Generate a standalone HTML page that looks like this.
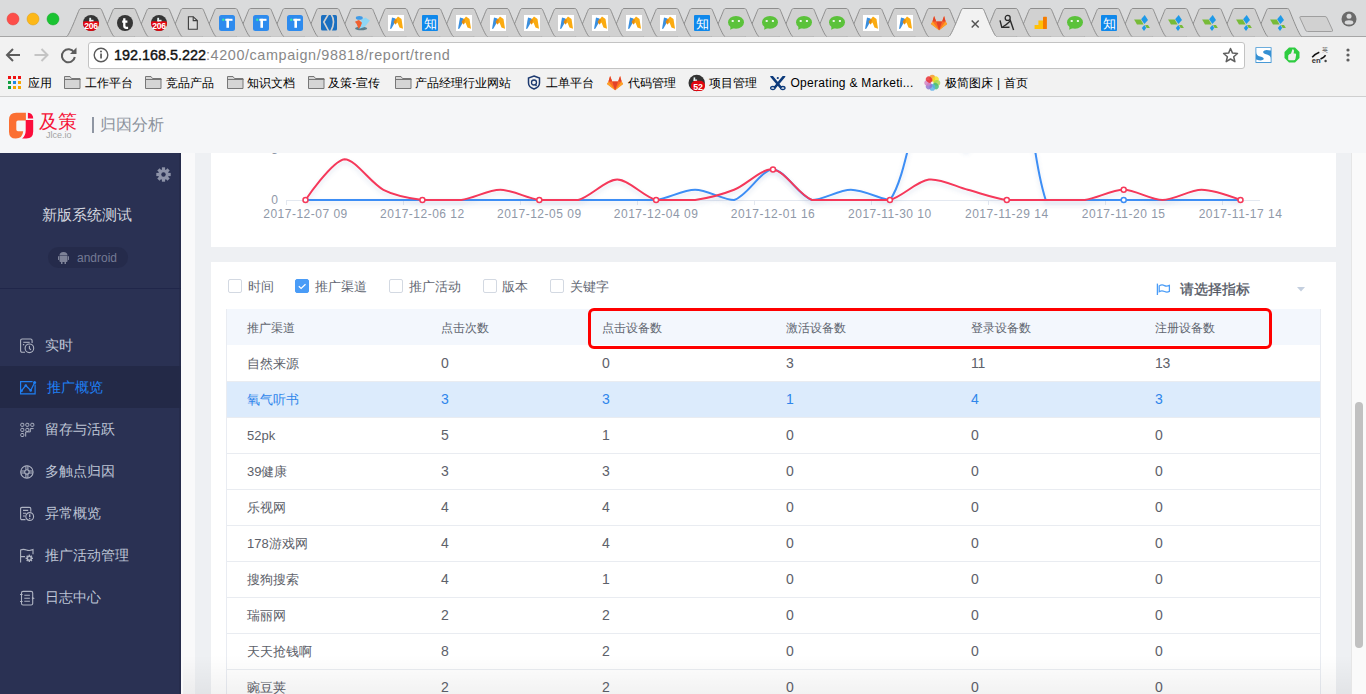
<!DOCTYPE html>
<html><head><meta charset="utf-8"><style>
*{box-sizing:border-box}
body{margin:0;width:1366px;height:694px;overflow:hidden;position:relative;background:#eef0f3;font-family:"Liberation Sans",sans-serif}
.abs{position:absolute}
.bk{position:absolute;top:74px;height:18px;line-height:18px;font-size:12px;color:#000;white-space:nowrap}
.th{position:absolute;top:318.6px;height:18px;line-height:18px;font-size:12px;color:#60656f;white-space:nowrap}
.tr{position:absolute;left:226px;width:1095px;height:36px;border-top:1px solid #e9ecf1}
.td{position:absolute;height:36px;line-height:36px;font-size:13px;color:#5d616a;white-space:nowrap}
.td.hl{color:#2f86eb}
.n{font-size:14px;letter-spacing:-0.3px;position:relative;top:-0.7px}
.cb{position:absolute;top:279px;width:14px;height:14px;border:1px solid #d3d9e2;border-radius:2px;background:#fff}
.cbt{position:absolute;top:277.6px;height:18px;line-height:18px;font-size:13px;color:#636873;white-space:nowrap}
</style></head><body>
<!-- tab strip -->
<div class="abs" style="left:0;top:0;width:1366px;height:37px;background:#dadbdc"></div>
<svg class="abs" style="left:0;top:0" width="1366" height="37">
<circle cx="13" cy="19" r="6" fill="#fd4e4a" stroke="#e23c37" stroke-width=".5"/>
<circle cx="33" cy="19" r="6" fill="#fdb818" stroke="#dc9c0f" stroke-width=".5"/>
<circle cx="53" cy="19" r="6" fill="#1ac332" stroke="#0ea824" stroke-width=".5"/>
<line x1="0" y1="36.5" x2="1366" y2="36.5" stroke="#a6a6a6" stroke-width="1"/>
<path d="M1254.0 36.5 C1256.5 36.5 1265.5 12 1267.0 9.5 Q1267.5 8.5 1268.5 8.5 L1287.3 8.5 Q1288.3 8.5 1289.0 9.5 C1290.3 12 1299.3 36.5 1301.8 36.5" fill="#d1d1d1" stroke="#8e8e8e" stroke-width="1"/><g transform="translate(1271,15)"><path d="M9.7 0.1L13 4.9L9.4 8.9L6.1 4.2Z" fill="#1f9ae8"/><path d="M-0.9 4.5H5.7L8.6 9.6H2Z" fill="#78bb38"/><path d="M10.1 10H13L14.9 12.9H11.6Z" fill="#78bb38"/><path d="M9.4 10L11.2 12.9L9 15.9L6.8 12.9Z" fill="#1f9ae8"/></g><path d="M1220.1 36.5 C1222.6 36.5 1231.6 12 1233.0 9.5 Q1233.6 8.5 1234.6 8.5 L1253.4 8.5 Q1254.4 8.5 1255.0 9.5 C1256.4 12 1265.4 36.5 1267.9 36.5" fill="#d1d1d1" stroke="#8e8e8e" stroke-width="1"/><g transform="translate(1237,15)"><path d="M9.7 0.1L13 4.9L9.4 8.9L6.1 4.2Z" fill="#1f9ae8"/><path d="M-0.9 4.5H5.7L8.6 9.6H2Z" fill="#78bb38"/><path d="M10.1 10H13L14.9 12.9H11.6Z" fill="#78bb38"/><path d="M9.4 10L11.2 12.9L9 15.9L6.8 12.9Z" fill="#1f9ae8"/></g><path d="M1186.2 36.5 C1188.7 36.5 1197.7 12 1199.1 9.5 Q1199.7 8.5 1200.7 8.5 L1219.5 8.5 Q1220.5 8.5 1221.1 9.5 C1222.5 12 1231.5 36.5 1234.0 36.5" fill="#d1d1d1" stroke="#8e8e8e" stroke-width="1"/><g transform="translate(1203,15)"><path d="M9.7 0.1L13 4.9L9.4 8.9L6.1 4.2Z" fill="#1f9ae8"/><path d="M-0.9 4.5H5.7L8.6 9.6H2Z" fill="#78bb38"/><path d="M10.1 10H13L14.9 12.9H11.6Z" fill="#78bb38"/><path d="M9.4 10L11.2 12.9L9 15.9L6.8 12.9Z" fill="#1f9ae8"/></g><path d="M1152.3 36.5 C1154.8 36.5 1163.8 12 1165.2 9.5 Q1165.8 8.5 1166.8 8.5 L1185.6 8.5 Q1186.6 8.5 1187.2 9.5 C1188.6 12 1197.6 36.5 1200.1 36.5" fill="#d1d1d1" stroke="#8e8e8e" stroke-width="1"/><g transform="translate(1169,15)"><path d="M9.7 0.1L13 4.9L9.4 8.9L6.1 4.2Z" fill="#1f9ae8"/><path d="M-0.9 4.5H5.7L8.6 9.6H2Z" fill="#78bb38"/><path d="M10.1 10H13L14.9 12.9H11.6Z" fill="#78bb38"/><path d="M9.4 10L11.2 12.9L9 15.9L6.8 12.9Z" fill="#1f9ae8"/></g><path d="M1118.3 36.5 C1120.8 36.5 1129.8 12 1131.2 9.5 Q1131.8 8.5 1132.8 8.5 L1151.6 8.5 Q1152.6 8.5 1153.2 9.5 C1154.6 12 1163.6 36.5 1166.1 36.5" fill="#d1d1d1" stroke="#8e8e8e" stroke-width="1"/><g transform="translate(1135,15)"><path d="M9.7 0.1L13 4.9L9.4 8.9L6.1 4.2Z" fill="#1f9ae8"/><path d="M-0.9 4.5H5.7L8.6 9.6H2Z" fill="#78bb38"/><path d="M10.1 10H13L14.9 12.9H11.6Z" fill="#78bb38"/><path d="M9.4 10L11.2 12.9L9 15.9L6.8 12.9Z" fill="#1f9ae8"/></g><path d="M1084.4 36.5 C1086.9 36.5 1095.9 12 1097.3 9.5 Q1097.9 8.5 1098.9 8.5 L1117.7 8.5 Q1118.7 8.5 1119.3 9.5 C1120.7 12 1129.7 36.5 1132.2 36.5" fill="#d1d1d1" stroke="#8e8e8e" stroke-width="1"/><g transform="translate(1101,15)"><rect width="16" height="16" rx="1" fill="#0f88eb"/><text x="8" y="12.8" font-size="12.5" fill="#fff" text-anchor="middle">知</text></g><path d="M1050.5 36.5 C1053.0 36.5 1062.0 12 1063.4 9.5 Q1064.0 8.5 1065.0 8.5 L1083.8 8.5 Q1084.8 8.5 1085.4 9.5 C1086.8 12 1095.8 36.5 1098.3 36.5" fill="#d1d1d1" stroke="#8e8e8e" stroke-width="1"/><g transform="translate(1067,15)"><ellipse cx="8" cy="7.3" rx="8" ry="6.4" fill="#5bc23a"/><path d="M2.5 11.5L2.2 14.8L6.5 12.8z" fill="#5bc23a"/><rect x="3.7" y="5" width="2" height="2" fill="#fff" opacity=".85"/><rect x="9.9" y="5" width="2" height="2" fill="#fff" opacity=".85"/></g><path d="M1016.5 36.5 C1019.0 36.5 1028.0 12 1029.4 9.5 Q1030.0 8.5 1031.0 8.5 L1049.8 8.5 Q1050.8 8.5 1051.4 9.5 C1052.8 12 1061.8 36.5 1064.3 36.5" fill="#d1d1d1" stroke="#8e8e8e" stroke-width="1"/><g transform="translate(1033,15)"><rect x="10" y="1.7" width="3.9" height="12.3" rx=".6" fill="#f57c00"/><path d="M1.6 14V9.9H5.4V5.5H10V14Z" fill="#ffc107"/></g><path d="M982.6 36.5 C985.1 36.5 994.1 12 995.5 9.5 Q996.1 8.5 997.1 8.5 L1015.9 8.5 Q1016.9 8.5 1017.5 9.5 C1018.9 12 1027.9 36.5 1030.4 36.5" fill="#d1d1d1" stroke="#8e8e8e" stroke-width="1"/><g transform="translate(999,15)"><circle cx="8.7" cy="2.9" r="2.5" fill="none" stroke="#2a2a2a" stroke-width="1.3"/><path d="M11 4.5L14.6 15" fill="none" stroke="#2a2a2a" stroke-width="1.4"/><path d="M1 5.3L2.8 12.4L10.5 12.2" fill="none" stroke="#2a2a2a" stroke-width="1.4"/><path d="M3.5 12Q8 9.5 11.2 6" fill="none" stroke="#2a2a2a" stroke-width="1.3"/></g><path d="M914.8 36.5 C917.2 36.5 926.2 12 927.6 9.5 Q928.2 8.5 929.2 8.5 L948.0 8.5 Q949.0 8.5 949.6 9.5 C951.0 12 960.0 36.5 962.5 36.5" fill="#d1d1d1" stroke="#8e8e8e" stroke-width="1"/><g transform="translate(931,16)"><path d="M8.1 14.3L0 8.1L1.5 5.5L3.1 0L5.2 5.4H11.1L13.1 0L14.6 5.5L16.1 8.1Z" fill="#fc6d26"/><path d="M0 8.1L1.5 5.5L8.1 14.3ZM16.1 8.1L14.6 5.5L8.1 14.3Z" fill="#fca326"/><path d="M1.5 5.5L3.1 0L5.2 5.4ZM14.6 5.5L13.1 0L11.1 5.4ZM5.2 5.4H11.1L8.1 14.3Z" fill="#e24329"/></g><path d="M880.8 36.5 C883.3 36.5 892.3 12 893.7 9.5 Q894.3 8.5 895.3 8.5 L914.1 8.5 Q915.1 8.5 915.7 9.5 C917.1 12 926.1 36.5 928.6 36.5" fill="#d1d1d1" stroke="#8e8e8e" stroke-width="1"/><g transform="translate(897,15)"><rect width="16" height="16" fill="#fff"/><path d="M5.5 7L10 1.5L13.5 4L15 13.8L11.5 12.5L9.5 7.5L7.5 9.5Z" fill="#fbab10"/><path d="M2 14L4 2.5L7.5 3.5L6 9L3.5 13.5Z" fill="#3a8fde"/><path d="M5.5 7L7.5 3.8 9 5 7.5 9.5z" fill="#e58a10"/></g><path d="M846.9 36.5 C849.4 36.5 858.4 12 859.8 9.5 Q860.4 8.5 861.4 8.5 L880.2 8.5 Q881.2 8.5 881.8 9.5 C883.2 12 892.2 36.5 894.7 36.5" fill="#d1d1d1" stroke="#8e8e8e" stroke-width="1"/><g transform="translate(863,15)"><rect width="16" height="16" fill="#fff"/><path d="M5.5 7L10 1.5L13.5 4L15 13.8L11.5 12.5L9.5 7.5L7.5 9.5Z" fill="#fbab10"/><path d="M2 14L4 2.5L7.5 3.5L6 9L3.5 13.5Z" fill="#3a8fde"/><path d="M5.5 7L7.5 3.8 9 5 7.5 9.5z" fill="#e58a10"/></g><path d="M813.0 36.5 C815.5 36.5 824.5 12 825.9 9.5 Q826.5 8.5 827.5 8.5 L846.3 8.5 Q847.3 8.5 847.9 9.5 C849.3 12 858.3 36.5 860.8 36.5" fill="#d1d1d1" stroke="#8e8e8e" stroke-width="1"/><g transform="translate(829,15)"><ellipse cx="8" cy="7.3" rx="8" ry="6.4" fill="#5bc23a"/><path d="M2.5 11.5L2.2 14.8L6.5 12.8z" fill="#5bc23a"/><rect x="3.7" y="5" width="2" height="2" fill="#fff" opacity=".85"/><rect x="9.9" y="5" width="2" height="2" fill="#fff" opacity=".85"/></g><path d="M779.0 36.5 C781.5 36.5 790.5 12 791.9 9.5 Q792.5 8.5 793.5 8.5 L812.3 8.5 Q813.3 8.5 813.9 9.5 C815.3 12 824.3 36.5 826.8 36.5" fill="#d1d1d1" stroke="#8e8e8e" stroke-width="1"/><g transform="translate(796,15)"><ellipse cx="8" cy="7.3" rx="8" ry="6.4" fill="#5bc23a"/><path d="M2.5 11.5L2.2 14.8L6.5 12.8z" fill="#5bc23a"/><rect x="3.7" y="5" width="2" height="2" fill="#fff" opacity=".85"/><rect x="9.9" y="5" width="2" height="2" fill="#fff" opacity=".85"/></g><path d="M745.1 36.5 C747.6 36.5 756.6 12 758.0 9.5 Q758.6 8.5 759.6 8.5 L778.4 8.5 Q779.4 8.5 780.0 9.5 C781.4 12 790.4 36.5 792.9 36.5" fill="#d1d1d1" stroke="#8e8e8e" stroke-width="1"/><g transform="translate(762,15)"><ellipse cx="8" cy="7.3" rx="8" ry="6.4" fill="#5bc23a"/><path d="M2.5 11.5L2.2 14.8L6.5 12.8z" fill="#5bc23a"/><rect x="3.7" y="5" width="2" height="2" fill="#fff" opacity=".85"/><rect x="9.9" y="5" width="2" height="2" fill="#fff" opacity=".85"/></g><path d="M711.2 36.5 C713.7 36.5 722.7 12 724.1 9.5 Q724.7 8.5 725.7 8.5 L744.5 8.5 Q745.5 8.5 746.1 9.5 C747.5 12 756.5 36.5 759.0 36.5" fill="#d1d1d1" stroke="#8e8e8e" stroke-width="1"/><g transform="translate(728,15)"><ellipse cx="8" cy="7.3" rx="8" ry="6.4" fill="#5bc23a"/><path d="M2.5 11.5L2.2 14.8L6.5 12.8z" fill="#5bc23a"/><rect x="3.7" y="5" width="2" height="2" fill="#fff" opacity=".85"/><rect x="9.9" y="5" width="2" height="2" fill="#fff" opacity=".85"/></g><path d="M677.2 36.5 C679.7 36.5 688.7 12 690.1 9.5 Q690.7 8.5 691.7 8.5 L710.5 8.5 Q711.5 8.5 712.1 9.5 C713.5 12 722.5 36.5 725.0 36.5" fill="#d1d1d1" stroke="#8e8e8e" stroke-width="1"/><g transform="translate(694,15)"><rect width="16" height="16" rx="1" fill="#0f88eb"/><text x="8" y="12.8" font-size="12.5" fill="#fff" text-anchor="middle">知</text></g><path d="M643.3 36.5 C645.8 36.5 654.8 12 656.2 9.5 Q656.8 8.5 657.8 8.5 L676.6 8.5 Q677.6 8.5 678.2 9.5 C679.6 12 688.6 36.5 691.1 36.5" fill="#d1d1d1" stroke="#8e8e8e" stroke-width="1"/><g transform="translate(660,15)"><rect width="16" height="16" fill="#fff"/><path d="M5.5 7L10 1.5L13.5 4L15 13.8L11.5 12.5L9.5 7.5L7.5 9.5Z" fill="#fbab10"/><path d="M2 14L4 2.5L7.5 3.5L6 9L3.5 13.5Z" fill="#3a8fde"/><path d="M5.5 7L7.5 3.8 9 5 7.5 9.5z" fill="#e58a10"/></g><path d="M609.4 36.5 C611.9 36.5 620.9 12 622.3 9.5 Q622.9 8.5 623.9 8.5 L642.7 8.5 Q643.7 8.5 644.3 9.5 C645.7 12 654.7 36.5 657.2 36.5" fill="#d1d1d1" stroke="#8e8e8e" stroke-width="1"/><g transform="translate(626,15)"><rect width="16" height="16" fill="#fff"/><path d="M5.5 7L10 1.5L13.5 4L15 13.8L11.5 12.5L9.5 7.5L7.5 9.5Z" fill="#fbab10"/><path d="M2 14L4 2.5L7.5 3.5L6 9L3.5 13.5Z" fill="#3a8fde"/><path d="M5.5 7L7.5 3.8 9 5 7.5 9.5z" fill="#e58a10"/></g><path d="M575.5 36.5 C578.0 36.5 587.0 12 588.4 9.5 Q589.0 8.5 590.0 8.5 L608.8 8.5 Q609.8 8.5 610.4 9.5 C611.8 12 620.8 36.5 623.2 36.5" fill="#d1d1d1" stroke="#8e8e8e" stroke-width="1"/><g transform="translate(592,15)"><rect width="16" height="16" fill="#fff"/><path d="M5.5 7L10 1.5L13.5 4L15 13.8L11.5 12.5L9.5 7.5L7.5 9.5Z" fill="#fbab10"/><path d="M2 14L4 2.5L7.5 3.5L6 9L3.5 13.5Z" fill="#3a8fde"/><path d="M5.5 7L7.5 3.8 9 5 7.5 9.5z" fill="#e58a10"/></g><path d="M541.5 36.5 C544.0 36.5 553.0 12 554.4 9.5 Q555.0 8.5 556.0 8.5 L574.8 8.5 Q575.8 8.5 576.4 9.5 C577.8 12 586.8 36.5 589.3 36.5" fill="#d1d1d1" stroke="#8e8e8e" stroke-width="1"/><g transform="translate(558,15)"><rect width="16" height="16" fill="#fff"/><path d="M5.5 7L10 1.5L13.5 4L15 13.8L11.5 12.5L9.5 7.5L7.5 9.5Z" fill="#fbab10"/><path d="M2 14L4 2.5L7.5 3.5L6 9L3.5 13.5Z" fill="#3a8fde"/><path d="M5.5 7L7.5 3.8 9 5 7.5 9.5z" fill="#e58a10"/></g><path d="M507.6 36.5 C510.1 36.5 519.1 12 520.5 9.5 Q521.1 8.5 522.1 8.5 L540.9 8.5 Q541.9 8.5 542.5 9.5 C543.9 12 552.9 36.5 555.4 36.5" fill="#d1d1d1" stroke="#8e8e8e" stroke-width="1"/><g transform="translate(524,15)"><rect width="16" height="16" fill="#fff"/><path d="M5.5 7L10 1.5L13.5 4L15 13.8L11.5 12.5L9.5 7.5L7.5 9.5Z" fill="#fbab10"/><path d="M2 14L4 2.5L7.5 3.5L6 9L3.5 13.5Z" fill="#3a8fde"/><path d="M5.5 7L7.5 3.8 9 5 7.5 9.5z" fill="#e58a10"/></g><path d="M473.7 36.5 C476.2 36.5 485.2 12 486.6 9.5 Q487.2 8.5 488.2 8.5 L507.0 8.5 Q508.0 8.5 508.6 9.5 C510.0 12 519.0 36.5 521.5 36.5" fill="#d1d1d1" stroke="#8e8e8e" stroke-width="1"/><g transform="translate(490,15)"><rect width="16" height="16" fill="#fff"/><path d="M5.5 7L10 1.5L13.5 4L15 13.8L11.5 12.5L9.5 7.5L7.5 9.5Z" fill="#fbab10"/><path d="M2 14L4 2.5L7.5 3.5L6 9L3.5 13.5Z" fill="#3a8fde"/><path d="M5.5 7L7.5 3.8 9 5 7.5 9.5z" fill="#e58a10"/></g><path d="M439.7 36.5 C442.2 36.5 451.2 12 452.6 9.5 Q453.2 8.5 454.2 8.5 L473.0 8.5 Q474.0 8.5 474.6 9.5 C476.0 12 485.0 36.5 487.5 36.5" fill="#d1d1d1" stroke="#8e8e8e" stroke-width="1"/><g transform="translate(456,15)"><rect width="16" height="16" fill="#fff"/><path d="M5.5 7L10 1.5L13.5 4L15 13.8L11.5 12.5L9.5 7.5L7.5 9.5Z" fill="#fbab10"/><path d="M2 14L4 2.5L7.5 3.5L6 9L3.5 13.5Z" fill="#3a8fde"/><path d="M5.5 7L7.5 3.8 9 5 7.5 9.5z" fill="#e58a10"/></g><path d="M405.8 36.5 C408.3 36.5 417.3 12 418.7 9.5 Q419.3 8.5 420.3 8.5 L439.1 8.5 Q440.1 8.5 440.7 9.5 C442.1 12 451.1 36.5 453.6 36.5" fill="#d1d1d1" stroke="#8e8e8e" stroke-width="1"/><g transform="translate(422,15)"><rect width="16" height="16" rx="1" fill="#0f88eb"/><text x="8" y="12.8" font-size="12.5" fill="#fff" text-anchor="middle">知</text></g><path d="M371.9 36.5 C374.4 36.5 383.4 12 384.8 9.5 Q385.4 8.5 386.4 8.5 L405.2 8.5 Q406.2 8.5 406.8 9.5 C408.2 12 417.2 36.5 419.7 36.5" fill="#d1d1d1" stroke="#8e8e8e" stroke-width="1"/><g transform="translate(388,15)"><rect width="16" height="16" fill="#fff"/><path d="M5.5 7L10 1.5L13.5 4L15 13.8L11.5 12.5L9.5 7.5L7.5 9.5Z" fill="#fbab10"/><path d="M2 14L4 2.5L7.5 3.5L6 9L3.5 13.5Z" fill="#3a8fde"/><path d="M5.5 7L7.5 3.8 9 5 7.5 9.5z" fill="#e58a10"/></g><path d="M337.9 36.5 C340.4 36.5 349.4 12 350.8 9.5 Q351.4 8.5 352.4 8.5 L371.2 8.5 Q372.2 8.5 372.8 9.5 C374.2 12 383.2 36.5 385.7 36.5" fill="#d1d1d1" stroke="#8e8e8e" stroke-width="1"/><g transform="translate(354,15)"><ellipse cx="7.1" cy="13.4" rx="6" ry="1.8" fill="#2a5b70" opacity=".7"/><path d="M7.5 4.2L11.5 2.4L15.9 5.5L10.6 12L5.3 13.8Z" fill="#8fd6f5"/><path d="M0.9 6.8L4.9 5L8 7.7L6.6 11.6L4.5 13.8L2.7 9Z" fill="#f0602f"/><ellipse cx="5.3" cy="2.9" rx="3.5" ry="1.8" fill="#3f9be8"/></g><path d="M304.0 36.5 C306.5 36.5 315.5 12 316.9 9.5 Q317.5 8.5 318.5 8.5 L337.3 8.5 Q338.3 8.5 338.9 9.5 C340.3 12 349.3 36.5 351.8 36.5" fill="#d1d1d1" stroke="#8e8e8e" stroke-width="1"/><g transform="translate(321,15)"><rect x="0" y="0" width="16" height="15.6" rx="1.5" fill="#1a6fc0"/><path d="M7.2 -0.5L2.8 7L7.7 16.2" fill="none" stroke="#d0d0d0" stroke-width="1.6"/><path d="M10.3 -0.5Q15 6.5 9.9 16.2" fill="none" stroke="#d0d0d0" stroke-width="1.6"/><circle cx="8.1" cy="7.7" r="2.4" fill="#1a6fc0"/></g><path d="M270.1 36.5 C272.6 36.5 281.6 12 283.0 9.5 Q283.6 8.5 284.6 8.5 L303.4 8.5 Q304.4 8.5 305.0 9.5 C306.4 12 315.4 36.5 317.9 36.5" fill="#d1d1d1" stroke="#8e8e8e" stroke-width="1"/><g transform="translate(287,15)"><rect x="0" y="0" width="16" height="16" rx="2.5" fill="#2e8bee"/><path d="M6.3 4.8H13.5" stroke="#fff" stroke-width="2"/><path d="M8.7 3.8V12.8" stroke="#fff" stroke-width="2.6"/><circle cx="4.3" cy="4.7" r="1.2" fill="#36e6a6"/></g><path d="M236.1 36.5 C238.6 36.5 247.6 12 249.0 9.5 Q249.6 8.5 250.6 8.5 L269.4 8.5 Q270.4 8.5 271.0 9.5 C272.4 12 281.4 36.5 283.9 36.5" fill="#d1d1d1" stroke="#8e8e8e" stroke-width="1"/><g transform="translate(253,15)"><rect x="0" y="0" width="16" height="16" rx="2.5" fill="#2e8bee"/><path d="M6.3 4.8H13.5" stroke="#fff" stroke-width="2"/><path d="M8.7 3.8V12.8" stroke="#fff" stroke-width="2.6"/><circle cx="4.3" cy="4.7" r="1.2" fill="#36e6a6"/></g><path d="M202.2 36.5 C204.7 36.5 213.7 12 215.1 9.5 Q215.7 8.5 216.7 8.5 L235.5 8.5 Q236.5 8.5 237.1 9.5 C238.5 12 247.5 36.5 250.0 36.5" fill="#d1d1d1" stroke="#8e8e8e" stroke-width="1"/><g transform="translate(219,15)"><rect x="0" y="0" width="16" height="16" rx="2.5" fill="#2e8bee"/><path d="M6.3 4.8H13.5" stroke="#fff" stroke-width="2"/><path d="M8.7 3.8V12.8" stroke="#fff" stroke-width="2.6"/><circle cx="4.3" cy="4.7" r="1.2" fill="#36e6a6"/></g><path d="M168.3 36.5 C170.8 36.5 179.8 12 181.2 9.5 Q181.8 8.5 182.8 8.5 L201.6 8.5 Q202.6 8.5 203.2 9.5 C204.6 12 213.6 36.5 216.1 36.5" fill="#d1d1d1" stroke="#8e8e8e" stroke-width="1"/><g transform="translate(185,15)"><path d="M3.4 1.7H8.2L12.3 5.6V14.3H3.4Z" fill="#dadada" stroke="#3c3c3c" stroke-width="1.1"/><path d="M8.2 1.7V5.6H12.3" fill="none" stroke="#3c3c3c" stroke-width="1.1"/></g><path d="M134.4 36.5 C136.9 36.5 145.9 12 147.3 9.5 Q147.9 8.5 148.9 8.5 L167.7 8.5 Q168.7 8.5 169.3 9.5 C170.7 12 179.7 36.5 182.2 36.5" fill="#d1d1d1" stroke="#8e8e8e" stroke-width="1"/><g transform="translate(151,15)"><clipPath id="cp159"><circle cx="8" cy="8" r="8"/></clipPath><g clip-path="url(#cp159)"><rect width="16" height="16" fill="#353535"/><rect x="-1" y="6.2" width="18" height="10" rx="3" fill="#e3060f"/><rect x="6.3" y="2.8" width="1.8" height="3.6" fill="#e8f4f4"/><rect x="6.3" y="4.8" width="4.2" height="1.6" fill="#e8f4f4"/></g><text x="8" y="14.3" font-size="8.6" font-weight="bold" fill="#fff" text-anchor="middle" letter-spacing="-0.3" font-family="Liberation Sans">206</text></g><path d="M100.4 36.5 C102.9 36.5 111.9 12 113.3 9.5 Q113.9 8.5 114.9 8.5 L133.7 8.5 Q134.7 8.5 135.3 9.5 C136.7 12 145.7 36.5 148.2 36.5" fill="#d1d1d1" stroke="#8e8e8e" stroke-width="1"/><g transform="translate(117,15)"><circle cx="8" cy="8" r="8" fill="#353535"/><path d="M7.3 3.2v7.6q0 2 2 2h1.8M5.2 6.6h5.2" stroke="#fff" stroke-width="2.3" fill="none"/></g><path d="M66.5 36.5 C69.0 36.5 78.0 12 79.4 9.5 Q80.0 8.5 81.0 8.5 L99.8 8.5 Q100.8 8.5 101.4 9.5 C102.8 12 111.8 36.5 114.3 36.5" fill="#d1d1d1" stroke="#8e8e8e" stroke-width="1"/><g transform="translate(83,15)"><clipPath id="cp91"><circle cx="8" cy="8" r="8"/></clipPath><g clip-path="url(#cp91)"><rect width="16" height="16" fill="#353535"/><rect x="-1" y="6.2" width="18" height="10" rx="3" fill="#e3060f"/><rect x="6.3" y="2.8" width="1.8" height="3.6" fill="#e8f4f4"/><rect x="6.3" y="4.8" width="4.2" height="1.6" fill="#e8f4f4"/></g><text x="8" y="14.3" font-size="8.6" font-weight="bold" fill="#fff" text-anchor="middle" letter-spacing="-0.3" font-family="Liberation Sans">206</text></g><path d="M948.7 36.5 C951.2 36.5 960.2 12 961.6 9.5 Q962.2 8.5 963.2 8.5 L982.0 8.5 Q983.0 8.5 983.6 9.5 C985.0 12 994.0 36.5 996.5 36.5" fill="#f2f2f2" stroke="#8e8e8e" stroke-width="1"/><rect x="949.2" y="36" width="47" height="1" fill="#f2f2f2"/><path d="M971.7 20.5l7 7m0-7l-7 7" stroke="#555" stroke-width="1.5"/>
<path d="M1300.5 16.5h24.5q1.5 0 2 1.5l5.5 12q.5 1.5-1 1.5h-24q-1.5 0-2-1.5l-5.5-12q-.5-1.5.5-1.5z" fill="#d1d1d1" stroke="#9f9f9f"/>
<circle cx="1349" cy="19" r="7.5" fill="#6b6b6b"/><circle cx="1349" cy="16.3" r="2.5" fill="#dadbdc"/><ellipse cx="1349" cy="22.4" rx="4.3" ry="2.1" fill="#dadbdc"/>
</svg>
<!-- toolbar -->
<div class="abs" style="left:0;top:37px;width:1366px;height:59px;background:#f2f2f2"></div>
<svg class="abs" style="left:0;top:37px" width="90" height="34">
<path d="M20 18H7.5M13 12l-6 6 6 6" fill="none" stroke="#5d5d5d" stroke-width="2"/>
<path d="M34.5 18H47M41.5 12l6 6-6 6" fill="none" stroke="#c4c4c4" stroke-width="2"/>
<path d="M74 15.5A6.5 6.5 0 1 0 74.8 20" fill="none" stroke="#5d5d5d" stroke-width="2"/><path d="M76.5 10.5v6.5h-6.5z" fill="#5d5d5d"/>
</svg>
<div class="abs" style="left:87.5px;top:41.5px;width:1157.5px;height:27px;background:#fff;border:1px solid #c3c3c3;border-radius:3px"></div>
<svg class="abs" style="left:92px;top:46px" width="18" height="18"><circle cx="9" cy="9" r="6.8" fill="none" stroke="#5a5a5a" stroke-width="1.4"/><rect x="8.2" y="7.5" width="1.7" height="5" fill="#5a5a5a"/><circle cx="9" cy="5.4" r="1" fill="#5a5a5a"/></svg>
<div class="abs" style="left:114px;top:46px;height:18px;line-height:18px;font-size:14.4px;letter-spacing:0.42px;color:#111;white-space:nowrap"><span style="-webkit-text-stroke:0.4px #111;color:#111;letter-spacing:0">192.168.5.222</span><span style="color:#888;letter-spacing:0.59px">:4200/campaign/98818/report/trend</span></div>
<svg class="abs" style="left:1220px;top:45px" width="20" height="20"><path d="M10.5 3.5l2 4.6 5 .4-3.8 3.3 1.2 4.9-4.4-2.7-4.3 2.7 1.2-4.9-3.8-3.3 5-.4z" fill="none" stroke="#5f5f5f" stroke-width="1.5" stroke-linejoin="round"/></svg>
<svg class="abs" style="left:1255px;top:47px" width="17" height="16"><rect x="0.5" y="0.3" width="16" height="15.6" fill="#3590d3"/><path d="M1.3 1.1H15.7V3.6Q9.5 1.9 8.2 4.6Q7.6 6.6 12 7.6Q15.8 8.6 15.7 12V15.1H1.3V12.4Q6.7 14.4 8.7 12.3Q9.3 10.6 5.2 9.6Q1.3 8.6 1.3 5Z" fill="#fff"/></svg>
<svg class="abs" style="left:1284px;top:47px" width="16" height="16"><path d="M5 .5h6l4.5 4.5v6L11 15.5H5L.5 11V5z" fill="#2ecc40"/><path d="M4.2 8.5Q5 7 7 6.5L8.5 2.3Q10 2 10 4L9.6 6.6H11.3Q12.3 6.8 12.1 8L11.4 12Q11 13.2 9.8 13.2H5.5Q4.2 13.2 4.2 12Z" fill="#eeeeee"/></svg>
<svg class="abs" style="left:1311px;top:46px" width="18" height="18"><path d="M1.2 11.3Q4 8 8.3 6.3M9.5 13Q13 11.5 14.6 9.2" fill="none" stroke="#111" stroke-width="1.5"/><text x="0.8" y="16.6" font-size="7.6" font-weight="bold" fill="#333" font-family="Liberation Sans">en</text><text x="11" y="6" font-size="5.5" fill="#444">英</text><circle cx="14.6" cy="15" r="1.2" fill="#444"/></svg>
<svg class="abs" style="left:1344px;top:47px" width="8" height="16"><circle cx="4" cy="3" r="1.6" fill="#5f5f5f"/><circle cx="4" cy="8" r="1.6" fill="#5f5f5f"/><circle cx="4" cy="13" r="1.6" fill="#5f5f5f"/></svg>
<!-- bookmarks -->
<svg style="position:absolute;left:8px;top:76px" width="13" height="13"><rect x="0" y="0" width="3" height="3" fill="#ee1111"/><rect x="5" y="0" width="3" height="3" fill="#ee1111"/><rect x="10" y="0" width="3" height="3" fill="#ee1111"/><rect x="0" y="5" width="3" height="3" fill="#12a041"/><rect x="5" y="5" width="3" height="3" fill="#1e88e5"/><rect x="10" y="5" width="3" height="3" fill="#f7a600"/><rect x="0" y="10" width="3" height="3" fill="#12a041"/><rect x="5" y="10" width="3" height="3" fill="#f7a600"/><rect x="10" y="10" width="3" height="3" fill="#f7a600"/></svg><div class="bk" style="left:27.5px">应用</div><svg style="position:absolute;left:64px;top:76px" width="17" height="13"><path d="M0.5 12.5V0.5h5.5l1.5 2h8.5v10z" fill="#d5d5d5" stroke="#777" stroke-width="1"/><path d="M0.5 3.5h16" stroke="#777"/></svg><div class="bk" style="left:85px">工作平台</div><svg style="position:absolute;left:145px;top:76px" width="17" height="13"><path d="M0.5 12.5V0.5h5.5l1.5 2h8.5v10z" fill="#d5d5d5" stroke="#777" stroke-width="1"/><path d="M0.5 3.5h16" stroke="#777"/></svg><div class="bk" style="left:166px">竞品产品</div><svg style="position:absolute;left:227px;top:76px" width="17" height="13"><path d="M0.5 12.5V0.5h5.5l1.5 2h8.5v10z" fill="#d5d5d5" stroke="#777" stroke-width="1"/><path d="M0.5 3.5h16" stroke="#777"/></svg><div class="bk" style="left:247px">知识文档</div><svg style="position:absolute;left:308px;top:76px" width="17" height="13"><path d="M0.5 12.5V0.5h5.5l1.5 2h8.5v10z" fill="#d5d5d5" stroke="#777" stroke-width="1"/><path d="M0.5 3.5h16" stroke="#777"/></svg><div class="bk" style="left:328px">及策-宣传</div><svg style="position:absolute;left:395px;top:76px" width="17" height="13"><path d="M0.5 12.5V0.5h5.5l1.5 2h8.5v10z" fill="#d5d5d5" stroke="#777" stroke-width="1"/><path d="M0.5 3.5h16" stroke="#777"/></svg><div class="bk" style="left:415px">产品经理行业网站</div><svg style="position:absolute;left:527px;top:75px" width="14" height="15"><path d="M7 1l5.5 2v5c0 3-2.5 5-5.5 6-3-1-5.5-3-5.5-6V3z" fill="none" stroke="#1d3a70" stroke-width="1.5"/><circle cx="7" cy="7.5" r="2.5" fill="none" stroke="#1d3a70" stroke-width="1.3"/><path d="M8 9l1.5 2" stroke="#1d3a70" stroke-width="1.3"/></svg><div class="bk" style="left:546px">工单平台</div><svg style="position:absolute;left:607px;top:75.7px" width="17" height="15"><path d="M8.1 14.3L0 8.1L1.5 5.5L3.1 0L5.2 5.4H11.1L13.1 0L14.6 5.5L16.1 8.1Z" fill="#fc6d26"/><path d="M0 8.1L1.5 5.5L8.1 14.3ZM16.1 8.1L14.6 5.5L8.1 14.3Z" fill="#fca326"/><path d="M1.5 5.5L3.1 0L5.2 5.4ZM14.6 5.5L13.1 0L11.1 5.4ZM5.2 5.4H11.1L8.1 14.3Z" fill="#e24329"/></svg><div class="bk" style="left:627.5px">代码管理</div><svg style="position:absolute;left:688px;top:74px" width="18" height="18"><circle cx="8.7" cy="9" r="8.2" fill="#333"/><rect x="5.6" y="3.4" width="1.6" height="3.6" fill="#e8f4f4"/><rect x="5.6" y="5.5" width="3.5" height="1.5" fill="#e8f4f4"/><path d="M2.9 12A5 5 0 0 1 7.9 6.7H12A5 5 0 0 1 17 11.7V12A5 5 0 0 1 12 17.1H7.9A5 5 0 0 1 2.9 12Z" fill="#e0060f"/><text x="10" y="15.5" font-size="8.8" font-weight="bold" fill="#fff" text-anchor="middle" letter-spacing="-0.2" font-family="Liberation Sans">52</text></svg><div class="bk" style="left:709px">项目管理</div><svg style="position:absolute;left:770px;top:75.7px" width="17" height="15"><path d="M1.6 0.4L10.4 11M14 0.4L5.2 11" stroke="#0c3a7b" stroke-width="2.6" stroke-linecap="round"/><ellipse cx="2.8" cy="12" rx="2.2" ry="1.5" fill="none" stroke="#0c3a7b" stroke-width="1.3"/><ellipse cx="12.8" cy="12" rx="2.2" ry="1.5" fill="none" stroke="#0c3a7b" stroke-width="1.3"/><circle cx="7.8" cy="2" r="1.1" fill="#0c3a7b"/></svg><div class="bk" style="left:790.5px;letter-spacing:0.29px">Operating &amp; Marketi...</div><svg style="position:absolute;left:924px;top:74px" width="17" height="17"><ellipse cx="8.3" cy="4.2" rx="2.9" ry="3.4" fill="#f7941d" transform="rotate(0 8.3 8.8)" opacity=".8"/><ellipse cx="8.3" cy="4.2" rx="2.9" ry="3.4" fill="#f2e01b" transform="rotate(45 8.3 8.8)" opacity=".8"/><ellipse cx="8.3" cy="4.2" rx="2.9" ry="3.4" fill="#a5d44a" transform="rotate(90 8.3 8.8)" opacity=".8"/><ellipse cx="8.3" cy="4.2" rx="2.9" ry="3.4" fill="#3dbb76" transform="rotate(135 8.3 8.8)" opacity=".8"/><ellipse cx="8.3" cy="4.2" rx="2.9" ry="3.4" fill="#5aaee8" transform="rotate(180 8.3 8.8)" opacity=".8"/><ellipse cx="8.3" cy="4.2" rx="2.9" ry="3.4" fill="#8e6fd0" transform="rotate(225 8.3 8.8)" opacity=".8"/><ellipse cx="8.3" cy="4.2" rx="2.9" ry="3.4" fill="#d47fc0" transform="rotate(270 8.3 8.8)" opacity=".8"/><ellipse cx="8.3" cy="4.2" rx="2.9" ry="3.4" fill="#e8262b" transform="rotate(315 8.3 8.8)" opacity=".8"/></svg><div class="bk" style="left:944.5px;letter-spacing:0.25px">极简图床 | 首页</div>
<div class="abs" style="left:0;top:96px;width:1366px;height:1px;background:#cfcfcf"></div>
<!-- main bg -->
<div class="abs" style="left:181px;top:153px;width:14px;height:541px;background:#f9f9fa"></div>
<!-- chart card -->
<div class="abs" style="left:211px;top:140px;width:1125px;height:107px;background:#fff"></div>
<svg class="abs" style="left:0;top:153px" width="1366" height="107" viewBox="0 153 1366 107"><defs><filter id="sh" x="-5%" y="-30%" width="110%" height="160%"><feGaussianBlur in="SourceAlpha" stdDeviation="2.2"/><feOffset dy="3" result="b"/><feFlood flood-color="#5a78b4" flood-opacity="0.2"/><feComposite in2="b" operator="in"/><feMerge><feMergeNode/><feMergeNode in="SourceGraphic"/></feMerge></filter></defs><line x1="286" y1="200.5" x2="1260" y2="200.5" stroke="#e3e8f0" stroke-width="1"/><line x1="286.5" y1="200" x2="286.5" y2="205" stroke="#e3e8f0" stroke-width="1"/><line x1="403.5" y1="200" x2="403.5" y2="205" stroke="#e3e8f0" stroke-width="1"/><line x1="520.5" y1="200" x2="520.5" y2="205" stroke="#e3e8f0" stroke-width="1"/><line x1="637.5" y1="200" x2="637.5" y2="205" stroke="#e3e8f0" stroke-width="1"/><line x1="754.5" y1="200" x2="754.5" y2="205" stroke="#e3e8f0" stroke-width="1"/><line x1="871.5" y1="200" x2="871.5" y2="205" stroke="#e3e8f0" stroke-width="1"/><line x1="988.5" y1="200" x2="988.5" y2="205" stroke="#e3e8f0" stroke-width="1"/><line x1="1105.5" y1="200" x2="1105.5" y2="205" stroke="#e3e8f0" stroke-width="1"/><line x1="1222.5" y1="200" x2="1222.5" y2="205" stroke="#e3e8f0" stroke-width="1"/><path d="M305.5 200.0 C305.5 200.0 332.8 200.0 344.5 200.0 C356.1 200.0 371.7 200.0 383.4 200.0 C395.1 200.0 410.7 200.0 422.4 200.0 C434.1 200.0 449.7 200.0 461.3 200.0 C473.0 200.0 488.6 200.0 500.3 200.0 C512.0 200.0 527.6 200.0 539.3 200.0 C550.9 200.0 566.5 200.0 578.2 200.0 C589.9 200.0 605.5 200.0 617.2 200.0 C628.9 200.0 644.6 200.0 656.1 200.0 C668.0 198.4 683.4 189.8 695.1 189.8 C706.8 189.8 723.6 200.0 734.1 200.0 C747.0 196.6 761.3 169.4 773.0 169.4 C784.7 169.4 799.1 196.6 812.0 200.0 C822.5 200.0 839.3 189.8 850.9 189.8 C862.6 189.8 884.0 200.0 889.9 200.0 C907.4 177.1 914.3 97.3 928.9 87.8 C937.7 82.0 961.5 159.7 967.8 149.0 C984.9 119.9 996.4 -44.8 1006.8 -44.8 C1019.8 -36.3 1025.5 136.5 1045.7 200.0 C1048.9 200.0 1073.0 200.0 1084.7 200.0 C1096.4 200.0 1112.0 200.0 1123.7 200.0 C1135.3 200.0 1150.9 200.0 1162.6 200.0 C1174.3 200.0 1189.9 200.0 1201.6 200.0 C1213.3 200.0 1240.5 200.0 1240.5 200.0" fill="none" stroke="#3d8ef5" stroke-width="2" filter="url(#sh)"/><path d="M305.5 200.0 C305.5 200.0 332.0 160.8 344.5 159.2 C355.4 159.2 370.5 183.0 383.4 189.8 C393.9 195.3 410.5 198.4 422.4 200.0 C433.9 200.0 449.8 200.0 461.3 200.0 C473.2 198.4 488.6 189.8 500.3 189.8 C512.0 189.8 527.4 198.4 539.3 200.0 C550.8 200.0 567.2 200.0 578.2 200.0 C590.6 196.8 605.5 179.6 617.2 179.6 C628.9 179.6 643.7 196.8 656.1 200.0 C667.1 200.0 683.6 200.0 695.1 200.0 C707.0 198.4 722.9 194.2 734.1 189.8 C746.3 185.0 762.0 168.0 773.0 169.4 C785.4 171.0 798.9 194.9 812.0 200.0 C822.3 200.0 839.3 200.0 850.9 200.0 C862.6 200.0 878.9 200.0 889.9 200.0 C902.3 196.8 916.7 181.2 928.9 179.6 C940.0 178.1 956.1 186.7 967.8 189.8 C979.5 192.9 994.9 198.4 1006.8 200.0 C1018.3 200.0 1034.1 200.0 1045.7 200.0 C1057.4 200.0 1073.2 200.0 1084.7 200.0 C1096.6 198.4 1112.0 189.8 1123.7 189.8 C1135.3 189.8 1150.9 200.0 1162.6 200.0 C1174.3 200.0 1189.9 189.8 1201.6 189.8 C1213.3 189.8 1240.5 200.0 1240.5 200.0" fill="none" stroke="#f5395a" stroke-width="2" filter="url(#sh)"/><circle cx="305.5" cy="200.0" r="2.5" fill="#fff" stroke="#f5395a" stroke-width="1.5"/><circle cx="422.4" cy="200.0" r="2.5" fill="#fff" stroke="#f5395a" stroke-width="1.5"/><circle cx="539.3" cy="200.0" r="2.5" fill="#fff" stroke="#f5395a" stroke-width="1.5"/><circle cx="656.1" cy="200.0" r="2.5" fill="#fff" stroke="#f5395a" stroke-width="1.5"/><circle cx="773.0" cy="169.4" r="2.5" fill="#fff" stroke="#f5395a" stroke-width="1.5"/><circle cx="889.9" cy="200.0" r="2.5" fill="#fff" stroke="#f5395a" stroke-width="1.5"/><circle cx="1006.8" cy="200.0" r="2.5" fill="#fff" stroke="#f5395a" stroke-width="1.5"/><circle cx="1123.7" cy="200" r="2.5" fill="#fff" stroke="#3d8ef5" stroke-width="1.5"/><circle cx="1123.7" cy="189.8" r="2.5" fill="#fff" stroke="#f5395a" stroke-width="1.5"/><circle cx="1240.5" cy="200.0" r="2.5" fill="#fff" stroke="#f5395a" stroke-width="1.5"/><text x="305.5" y="218" text-anchor="middle" font-size="12" letter-spacing="0.5" fill="#8f98a8">2017-12-07 09</text><text x="422.4" y="218" text-anchor="middle" font-size="12" letter-spacing="0.5" fill="#8f98a8">2017-12-06 12</text><text x="539.3" y="218" text-anchor="middle" font-size="12" letter-spacing="0.5" fill="#8f98a8">2017-12-05 09</text><text x="656.1" y="218" text-anchor="middle" font-size="12" letter-spacing="0.5" fill="#8f98a8">2017-12-04 09</text><text x="773.0" y="218" text-anchor="middle" font-size="12" letter-spacing="0.5" fill="#8f98a8">2017-12-01 16</text><text x="889.9" y="218" text-anchor="middle" font-size="12" letter-spacing="0.5" fill="#8f98a8">2017-11-30 10</text><text x="1006.8" y="218" text-anchor="middle" font-size="12" letter-spacing="0.5" fill="#8f98a8">2017-11-29 14</text><text x="1123.7" y="218" text-anchor="middle" font-size="12" letter-spacing="0.5" fill="#8f98a8">2017-11-20 15</text><text x="1240.5" y="218" text-anchor="middle" font-size="12" letter-spacing="0.5" fill="#8f98a8">2017-11-17 14</text><text x="278" y="204" text-anchor="end" font-size="12" fill="#8f98a8">0</text><text x="278" y="154" text-anchor="end" font-size="12" fill="#8f98a8">5</text></svg>
<!-- table card -->
<div class="abs" style="left:211px;top:262px;width:1125px;height:440px;background:#fff"></div>
<div class="cb" style="left:228px"></div><div class="cbt" style="left:247.5px">时间</div>
<div class="cb" style="left:295px;background:#4a9cf7;border-color:#4a9cf7"><svg width="12" height="12" style="position:absolute;left:0;top:0"><path d="M2.8 6.3l2.3 2.2 4.4-4.2" fill="none" stroke="#fff" stroke-width="1.2"/></svg></div><div class="cbt" style="left:315px">推广渠道</div>
<div class="cb" style="left:389px"></div><div class="cbt" style="left:408.5px">推广活动</div>
<div class="cb" style="left:483px"></div><div class="cbt" style="left:502px">版本</div>
<div class="cb" style="left:550px"></div><div class="cbt" style="left:570px">关键字</div>
<svg class="abs" style="left:1155px;top:282.7px" width="16" height="14"><path d="M2.4 0.6V12" stroke="#4a9cf7" stroke-width="1.3"/><path d="M4.2 2.9C6.5 1.4 8.3 2 9.5 2.6S12.5 3.3 14.4 2.4V8.4C12.5 9.4 10.7 9 9.5 8.5S6.5 7.4 4.2 8.7Z" fill="none" stroke="#4a9cf7" stroke-width="1.25"/></svg>
<div class="abs" style="left:1179.5px;top:279px;height:20px;line-height:20px;font-size:14px;-webkit-text-stroke:0.28px #50555f;color:#50555f;white-space:nowrap">请选择指标</div>
<svg class="abs" style="left:1297px;top:286.8px" width="8" height="5"><path d="M0 0h8L4 4.6z" fill="#c4cfdf"/></svg>
<div style="position:absolute;left:226px;top:309px;width:1095px;height:36px;background:#f3f7fd"></div><div class="th" style="left:247px">推广渠道</div><div class="th" style="left:441px">点击次数</div><div class="th" style="left:602px">点击设备数</div><div class="th" style="left:786px">激活设备数</div><div class="th" style="left:971px">登录设备数</div><div class="th" style="left:1155px">注册设备数</div><div class="tr" style="top:345px;background:#fff;border-top:none;"></div><div class="td" style="left:247px;top:345.6px">自然来源</div><div class="td" style="left:441px;top:345.6px"><span class="n">0</span></div><div class="td" style="left:602px;top:345.6px"><span class="n">0</span></div><div class="td" style="left:786px;top:345.6px"><span class="n">3</span></div><div class="td" style="left:971px;top:345.6px"><span class="n">11</span></div><div class="td" style="left:1155px;top:345.6px"><span class="n">13</span></div><div class="tr" style="top:381px;background:#dcebfc;"></div><div class="td hl" style="left:247px;top:381.6px">氧气听书</div><div class="td hl" style="left:441px;top:381.6px"><span class="n">3</span></div><div class="td hl" style="left:602px;top:381.6px"><span class="n">3</span></div><div class="td hl" style="left:786px;top:381.6px"><span class="n">1</span></div><div class="td hl" style="left:971px;top:381.6px"><span class="n">4</span></div><div class="td hl" style="left:1155px;top:381.6px"><span class="n">3</span></div><div class="tr" style="top:417px;background:#fff;"></div><div class="td" style="left:247px;top:417.6px">52pk</div><div class="td" style="left:441px;top:417.6px"><span class="n">5</span></div><div class="td" style="left:602px;top:417.6px"><span class="n">1</span></div><div class="td" style="left:786px;top:417.6px"><span class="n">0</span></div><div class="td" style="left:971px;top:417.6px"><span class="n">0</span></div><div class="td" style="left:1155px;top:417.6px"><span class="n">0</span></div><div class="tr" style="top:453px;background:#fff;"></div><div class="td" style="left:247px;top:453.6px">39健康</div><div class="td" style="left:441px;top:453.6px"><span class="n">3</span></div><div class="td" style="left:602px;top:453.6px"><span class="n">3</span></div><div class="td" style="left:786px;top:453.6px"><span class="n">0</span></div><div class="td" style="left:971px;top:453.6px"><span class="n">0</span></div><div class="td" style="left:1155px;top:453.6px"><span class="n">0</span></div><div class="tr" style="top:489px;background:#fff;"></div><div class="td" style="left:247px;top:489.6px">乐视网</div><div class="td" style="left:441px;top:489.6px"><span class="n">4</span></div><div class="td" style="left:602px;top:489.6px"><span class="n">4</span></div><div class="td" style="left:786px;top:489.6px"><span class="n">0</span></div><div class="td" style="left:971px;top:489.6px"><span class="n">0</span></div><div class="td" style="left:1155px;top:489.6px"><span class="n">0</span></div><div class="tr" style="top:525px;background:#fff;"></div><div class="td" style="left:247px;top:525.6px">178游戏网</div><div class="td" style="left:441px;top:525.6px"><span class="n">4</span></div><div class="td" style="left:602px;top:525.6px"><span class="n">4</span></div><div class="td" style="left:786px;top:525.6px"><span class="n">0</span></div><div class="td" style="left:971px;top:525.6px"><span class="n">0</span></div><div class="td" style="left:1155px;top:525.6px"><span class="n">0</span></div><div class="tr" style="top:561px;background:#fff;"></div><div class="td" style="left:247px;top:561.6px">搜狗搜索</div><div class="td" style="left:441px;top:561.6px"><span class="n">4</span></div><div class="td" style="left:602px;top:561.6px"><span class="n">1</span></div><div class="td" style="left:786px;top:561.6px"><span class="n">0</span></div><div class="td" style="left:971px;top:561.6px"><span class="n">0</span></div><div class="td" style="left:1155px;top:561.6px"><span class="n">0</span></div><div class="tr" style="top:597px;background:#fff;"></div><div class="td" style="left:247px;top:597.6px">瑞丽网</div><div class="td" style="left:441px;top:597.6px"><span class="n">2</span></div><div class="td" style="left:602px;top:597.6px"><span class="n">2</span></div><div class="td" style="left:786px;top:597.6px"><span class="n">0</span></div><div class="td" style="left:971px;top:597.6px"><span class="n">0</span></div><div class="td" style="left:1155px;top:597.6px"><span class="n">0</span></div><div class="tr" style="top:633px;background:#fff;"></div><div class="td" style="left:247px;top:633.6px">天天抢钱啊</div><div class="td" style="left:441px;top:633.6px"><span class="n">8</span></div><div class="td" style="left:602px;top:633.6px"><span class="n">2</span></div><div class="td" style="left:786px;top:633.6px"><span class="n">0</span></div><div class="td" style="left:971px;top:633.6px"><span class="n">0</span></div><div class="td" style="left:1155px;top:633.6px"><span class="n">0</span></div><div class="tr" style="top:669px;background:#fff;"></div><div class="td" style="left:247px;top:669.6px">豌豆荚</div><div class="td" style="left:441px;top:669.6px"><span class="n">2</span></div><div class="td" style="left:602px;top:669.6px"><span class="n">2</span></div><div class="td" style="left:786px;top:669.6px"><span class="n">0</span></div><div class="td" style="left:971px;top:669.6px"><span class="n">0</span></div><div class="td" style="left:1155px;top:669.6px"><span class="n">0</span></div>
<div class="abs" style="left:226px;top:309px;width:1px;height:400px;background:#e9ecf2"></div><div class="abs" style="left:1320px;top:309px;width:1px;height:400px;background:#e9ecf2"></div>
<!-- red annotation -->
<div class="abs" style="left:588px;top:308px;width:684px;height:41px;border:3px solid #ff0000;border-radius:6px"></div>
<!-- scrollbar -->
<div class="abs" style="left:1351px;top:153px;width:15px;height:541px;background:#fafafa;border-left:1px solid #e6e6e6"></div>
<div class="abs" style="left:1355px;top:402px;width:8px;height:246px;background:#c1c1c1;border-radius:4px"></div>
<!-- header -->
<div class="abs" style="left:0;top:97px;width:1366px;height:56px;background:#f5f6f8"></div>
<svg class="abs" style="left:5px;top:108px" width="35" height="35"><path d="M4 12Q4 4.8 11.2 4.8H20.9V12.4H13Q11.3 12.4 11.3 14.2V21.4Q11.3 23.2 13 23.2H18.2Q17.6 30.5 10.8 30.5Q4 30.5 4 23.7Z" fill="#fb6f33"/><path d="M20.7 12.1H28.2V23.5Q28.2 30.5 21.2 30.5H17.1Q20.7 27.5 20.7 22.5Z" fill="#fc0d3c"/><path d="M22.9 4.8Q28.2 5.2 28.2 10.6H22.9Z" fill="#fc0d3c"/></svg>
<div class="abs" style="left:39px;top:110.5px;height:22px;line-height:22px;font-size:19px;color:#f5153a;white-space:nowrap">及策</div>
<div class="abs" style="left:46px;top:130px;height:11px;line-height:11px;font-size:9px;color:#a2a2a2;white-space:nowrap">Jlce.io</div>
<div class="abs" style="left:92px;top:117px;width:1.5px;height:16px;background:#8f96a3"></div>
<div class="abs" style="left:99.5px;top:114px;height:22px;line-height:22px;font-size:16px;color:#8c929c;white-space:nowrap">归因分析</div>
<!-- sidebar -->
<div class="abs" style="left:0;top:153px;width:181px;height:541px;background:#2a3153;border-right:2px solid #262c4c"></div>
<svg class="abs" style="left:156px;top:167px" width="15" height="15"><g transform="translate(7.5 7.5)" fill="#8d93a8"><circle r="5.2"/><rect x="-1.6" y="-7.2" width="3.2" height="3" transform="rotate(0)"/><rect x="-1.6" y="-7.2" width="3.2" height="3" transform="rotate(45)"/><rect x="-1.6" y="-7.2" width="3.2" height="3" transform="rotate(90)"/><rect x="-1.6" y="-7.2" width="3.2" height="3" transform="rotate(135)"/><rect x="-1.6" y="-7.2" width="3.2" height="3" transform="rotate(180)"/><rect x="-1.6" y="-7.2" width="3.2" height="3" transform="rotate(225)"/><rect x="-1.6" y="-7.2" width="3.2" height="3" transform="rotate(270)"/><rect x="-1.6" y="-7.2" width="3.2" height="3" transform="rotate(315)"/></g><circle cx="7.5" cy="7.5" r="2.2" fill="#2a3153"/></svg>
<div class="abs" style="left:42px;top:205px;height:20px;line-height:20px;font-size:15px;color:#d3d6df;white-space:nowrap">新版系统测试</div>
<div class="abs" style="left:48px;top:247px;width:80px;height:21px;border-radius:11px;background:#252b4b"></div>
<svg class="abs" style="left:58px;top:251px" width="11" height="13"><path d="M1.5 5h8v5q0 1-1 1h-6q-1 0-1-1z" fill="#7e8398"/><path d="M1.5 4.5q0-3.5 4-3.5t4 3.5z" fill="#7e8398"/><rect x="0" y="5" width="1" height="4" rx=".5" fill="#7e8398"/><rect x="10" y="5" width="1" height="4" rx=".5" fill="#7e8398"/><rect x="3" y="10" width="1.5" height="3" fill="#7e8398"/><rect x="6.5" y="10" width="1.5" height="3" fill="#7e8398"/></svg>
<div class="abs" style="left:77px;top:249.5px;height:17px;line-height:17px;font-size:12px;color:#747a94;letter-spacing:0px;white-space:nowrap">android</div>
<div class="abs" style="left:0;top:288px;width:181px;height:1px;background:#20264a"></div>
<svg style="position:absolute;left:20px;top:338px;color:#aeb3c2" width="17" height="17"><g fill="none" stroke="currentColor" stroke-width="1.1"><path d="M5 14.3H2.1Q0.6 14.3 0.6 12.8V2.5Q0.6 1 2.1 1H10.6Q12.1 1 12.1 2.5V5"/><path d="M3.3 4.3H9.7"/><circle cx="9.4" cy="10.3" r="4.3"/><path d="M9.4 7.8V10.4L11 11.8"/></g><rect x="2.9" y="6" width="1.3" height="1.3" fill="currentColor"/></svg><div style="position:absolute;left:44.5px;top:335px;height:20px;line-height:20px;font-size:14px;color:#bec5d5">实时</div><div style="position:absolute;left:0;top:366px;width:181px;height:42px;background:#232947"></div><svg style="position:absolute;left:20px;top:380px;color:#1f7ff2" width="17" height="17"><g fill="none" stroke="currentColor" stroke-width="1.2"><path d="M12.6 1.6H0.6V13.8H15.1V4.6"/><path d="M1.4 10.9L5.8 5.5L10.7 10.4L14.4 3"/></g><g fill="currentColor"><circle cx="14.6" cy="2.6" r="1.5"/><circle cx="1.6" cy="10.8" r="1.3"/><circle cx="5.8" cy="5.5" r="1.3"/><circle cx="10.7" cy="10.4" r="1.3"/></g></svg><div style="position:absolute;left:47px;top:377px;height:20px;line-height:20px;font-size:14px;color:#1f80f5">推广概览</div><svg style="position:absolute;left:20px;top:422px;color:#aeb3c2" width="17" height="17"><g fill="none" stroke="currentColor" stroke-width="1"><rect x="0.8" y="1.3" width="3" height="3" rx=".8"/><rect x="5.8" y="1.3" width="3" height="3" rx=".8"/><rect x="10.8" y="1.3" width="3" height="3" rx=".8"/><rect x="0.8" y="6.4" width="3" height="3" rx=".8"/><rect x="5.8" y="6.4" width="3" height="3" rx=".8"/><rect x="0.8" y="11.5" width="3" height="3" rx=".8"/><path d="M13.6 6.6H10.3V9.9H5.7V14.6"/></g></svg><div style="position:absolute;left:44.5px;top:419px;height:20px;line-height:20px;font-size:14px;color:#bec5d5">留存与活跃</div><svg style="position:absolute;left:20px;top:464px;color:#aeb3c2" width="17" height="17"><g fill="none" stroke="currentColor" stroke-width="1.05"><circle cx="6.9" cy="7.9" r="6.2"/><circle cx="6.9" cy="7.9" r="2.2"/><path d="M5.9 1.8V5.8M7.9 1.8V5.8M5.9 10V14M7.9 10V14M0.8 6.9H4.8M0.8 8.9H4.8M9 6.9H13M9 8.9H13"/></g></svg><div style="position:absolute;left:44.5px;top:461px;height:20px;line-height:20px;font-size:14px;color:#bec5d5">多触点归因</div><svg style="position:absolute;left:20px;top:506px;color:#aeb3c2" width="17" height="17"><g fill="none" stroke="currentColor" stroke-width="1.1"><path d="M5.5 13.6H2Q0.6 13.6 0.6 12.2V2.8Q0.6 1.4 2 1.4H9.4Q10.8 1.4 10.8 2.8V5.8"/><path d="M3 4.4H8.2M3 7.2H6M3 10H5"/><circle cx="9.7" cy="10.5" r="3.9"/></g><path d="M9.7 8.3V10.9" stroke="currentColor" stroke-width="1.4"/><circle cx="9.7" cy="12.4" r=".7" fill="currentColor"/></svg><div style="position:absolute;left:44.5px;top:503px;height:20px;line-height:20px;font-size:14px;color:#bec5d5">异常概览</div><svg style="position:absolute;left:20px;top:548px;color:#aeb3c2" width="17" height="17"><g fill="none" stroke="currentColor" stroke-width="1.1"><path d="M0.6 14.6V1.9Q3.5 0.9 6.5 2T13 1.6V6.2M0.6 8.6H5"/><circle cx="9.3" cy="10.3" r="2" stroke-width="1.5"/></g><g fill="currentColor"><rect x="8.6" y="6.6" width="1.4" height="1.8" transform="rotate(0 9.3 10.3)"/><rect x="8.6" y="6.6" width="1.4" height="1.8" transform="rotate(45 9.3 10.3)"/><rect x="8.6" y="6.6" width="1.4" height="1.8" transform="rotate(90 9.3 10.3)"/><rect x="8.6" y="6.6" width="1.4" height="1.8" transform="rotate(135 9.3 10.3)"/><rect x="8.6" y="6.6" width="1.4" height="1.8" transform="rotate(180 9.3 10.3)"/><rect x="8.6" y="6.6" width="1.4" height="1.8" transform="rotate(225 9.3 10.3)"/><rect x="8.6" y="6.6" width="1.4" height="1.8" transform="rotate(270 9.3 10.3)"/><rect x="8.6" y="6.6" width="1.4" height="1.8" transform="rotate(315 9.3 10.3)"/></g></svg><div style="position:absolute;left:44.5px;top:545px;height:20px;line-height:20px;font-size:14px;color:#bec5d5">推广活动管理</div><svg style="position:absolute;left:20px;top:590px;color:#aeb3c2" width="17" height="17"><g fill="none" stroke="currentColor" stroke-width="1.1"><rect x="1.5" y="1.4" width="11.2" height="13.6" rx="1.6"/><path d="M4.3 5.2H9.9M4.3 8.2H9.9M4.3 11.2H9.9M0 4.5H2.6M0 11.5H2.6M12 7.5L13.6 8.3L12 9.1"/></g></svg><div style="position:absolute;left:44.5px;top:587px;height:20px;line-height:20px;font-size:14px;color:#bec5d5">日志中心</div>
<div class="abs" style="left:183px;top:655px;width:1168px;height:39px;background:linear-gradient(rgba(0,0,0,0),rgba(0,0,0,0.05))"></div>
</body></html>
